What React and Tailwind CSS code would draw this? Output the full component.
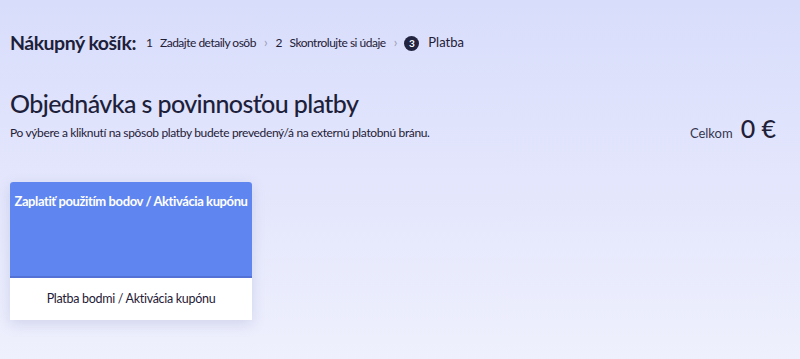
import React from "react";

export default function App() {
  return (
    <div
      className="w-[800px] h-[359px] overflow-hidden bg-gradient-to-b from-[#d8ddfb] via-[#e3e6fc] to-[#eef0fd] text-[#1f2037]"
      style={{ fontFamily: "Lato, 'Open Sans', sans-serif" }}
    >
      <div className="pl-[10px] pr-[24px] pt-[30px]">
        <div className="flex items-center h-[26px]">
          <span className="text-[19.5px] font-bold tracking-[-0.5px] text-[#1e1f3a]">Nákupný košík:</span>
          <span className="ml-[10px] text-[12px]">1</span>
          <span className="ml-[7px] text-[12px] tracking-[-0.5px]">Zadajte detaily osôb</span>
          <span className="ml-[8px] text-[13px] text-[#9a9db5]">›</span>
          <span className="ml-[8px] text-[12px]">2</span>
          <span className="ml-[7px] text-[12px] tracking-[-0.5px]">Skontrolujte si údaje</span>
          <span className="ml-[8px] text-[13px] text-[#9a9db5]">›</span>
          <span className="ml-[7px] w-[15px] h-[15px] rounded-full bg-[#23243f] text-white text-[10px] font-bold flex items-center justify-center">3</span>
          <span className="ml-[9px] text-[13px]">Platba</span>
        </div>

        <div className="mt-[31px] flex items-end justify-between">
          <div>
            <h1 className="text-[25px] leading-[32px] font-medium tracking-[-0.6px] text-[#1e1f3a]">Objednávka s povinnosťou platby</h1>
            <p className="mt-[6px] text-[12px] tracking-[-0.35px] leading-[16px]">Po výbere a kliknutí na spôsob platby budete prevedený/á na externú platobnú bránu.</p>
          </div>
          <div className="flex items-baseline gap-[8px] mb-[-2px]">
            <span className="text-[13px] text-[#34364f]">Celkom</span>
            <span className="text-[25px] font-medium leading-[30px]">0 €</span>
          </div>
        </div>

        <div className="mt-[41px] w-[242px] rounded-t-[3px] bg-white shadow-[0_4px_14px_rgba(90,100,160,0.18)]">
          <div className="h-[96px] bg-[#5f86f0] rounded-t-[3px] border-b-[2px] border-[#5472d6] pt-[6px] text-center">
            <span className="text-white text-[13px] font-bold tracking-[-0.4px]">Zaplatiť použitím bodov / Aktivácia kupónu</span>
          </div>
          <div className="h-[42px] flex items-center justify-center text-[12.5px] tracking-[-0.3px] text-[#1f2037]">
            Platba bodmi / Aktivácia kupónu
          </div>
        </div>
      </div>
    </div>
  );
}
